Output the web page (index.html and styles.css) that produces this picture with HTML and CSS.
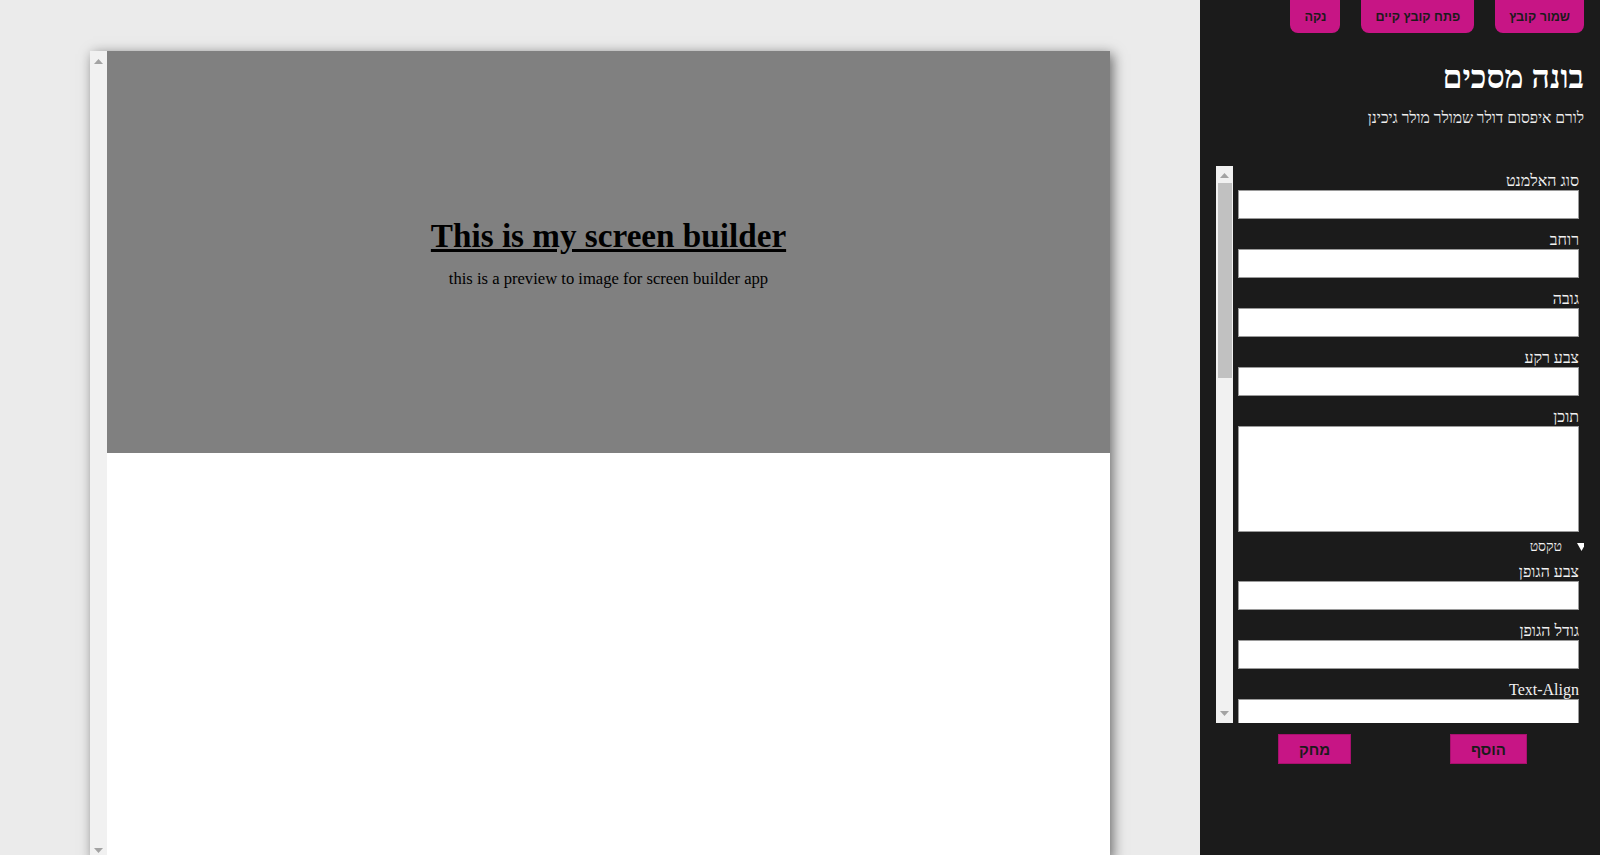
FILE: index.html
```html
<!DOCTYPE html>
<html lang="he">
<head>
<meta charset="utf-8">
<title>בונה מסכים</title>
<link rel="stylesheet" href="styles.css">
</head>
<body>
<div class="app">
  <main class="stage">
    <div class="frame">
      <div class="vscroll vscroll-frame">
        <svg class="arrow" width="9" height="5" viewBox="0 0 9 5"><path d="M0 5 L4.5 0 L9 5 Z"/></svg>
        <span class="track"></span>
        <svg class="arrow" width="9" height="5" viewBox="0 0 9 5"><path d="M0 0 L4.5 5 L9 0 Z"/></svg>
      </div>
      <div class="canvas">
        <section class="hero">
          <h1 class="hero-title">This is my screen builder</h1>
          <p class="hero-text">this is a preview to image for screen builder app</p>
        </section>
      </div>
    </div>
  </main>

  <aside class="sidebar" dir="rtl">
    <div class="toolbar">
      <button class="tool-btn">שמור קובץ</button>
      <button class="tool-btn">פתח קובץ קיים</button>
      <button class="tool-btn">נקה</button>
    </div>
    <h2 class="side-title">בונה מסכים</h2>
    <p class="side-lead">לורם איפסום דולר שמולר מולר גיכינן</p>

    <div class="form-box">
      <div class="form-scroll">
        <label class="field-label">סוג האלמנט</label>
        <input class="field" type="text">
        <label class="field-label">רוחב</label>
        <input class="field" type="text">
        <label class="field-label">גובה</label>
        <input class="field" type="text">
        <label class="field-label">צבע רקע</label>
        <input class="field" type="text">
        <label class="field-label">תוכן</label>
        <textarea class="field area"></textarea>
        <div class="group">
          <div class="summary">
            <svg class="marker" width="9" height="8" viewBox="0 0 9 8"><path d="M0 0 L9 0 L4.5 8 Z"/></svg>
            <span>טקסט</span>
          </div>
          <label class="field-label first">צבע הגופן</label>
          <input class="field" type="text">
          <label class="field-label">גודל הגופן</label>
          <input class="field" type="text">
          <label class="field-label">Text-Align</label>
          <input class="field" type="text">
        </div>
      </div>
      <div class="vscroll vscroll-form">
        <svg class="arrow" width="9" height="5" viewBox="0 0 9 5"><path d="M0 5 L4.5 0 L9 5 Z"/></svg>
        <span class="thumb"></span>
        <span class="track"></span>
        <svg class="arrow" width="9" height="5" viewBox="0 0 9 5"><path d="M0 0 L4.5 5 L9 0 Z"/></svg>
      </div>
    </div>

    <div class="actions">
      <button class="act-btn">הוסף</button>
      <button class="act-btn">מחק</button>
    </div>
  </aside>
</div>
</body>
</html>
```

FILE: styles.css
```css
* { box-sizing: border-box; }

html, body {
  margin: 0;
  padding: 0;
  height: 100%;
  overflow: hidden;
}

body {
  font-family: "Liberation Serif", "Times New Roman", serif;
  font-size: 16px;
  background: #ebebeb;
}

.app {
  display: flex;
  height: 855px;
}

/* ---------- preview stage ---------- */
.stage {
  width: 1200px;
  flex: none;
  padding: 51px 0 0 90px;
}

.frame {
  width: 1020px;
  height: 808px;
  display: flex;
  background: #ffffff;
  box-shadow: 3px 3px 12px rgba(0, 0, 0, 0.55);
}

.vscroll {
  width: 17px;
  flex: none;
  display: flex;
  flex-direction: column;
  align-items: center;
  background: #f1f1f1;
}

.vscroll .arrow {
  fill: #a3a3a3;
  flex: none;
}

.vscroll-frame {
  padding: 8px 0 6px;
}

.vscroll .track {
  flex: 1;
}

.canvas {
  flex: 1;
  display: flex;
  flex-direction: column;
}

.hero {
  height: 402px;
  background: #808080;
  display: flex;
  flex-direction: column;
  align-items: center;
  padding-top: 165px;
}

.hero-title {
  margin: 0;
  font-size: 33.2px;
  line-height: 39px;
  font-weight: bold;
  text-decoration: underline;
  color: #000;
}

.hero-text {
  margin: 13px 0 0;
  font-size: 16.6px;
  line-height: 21px;
  color: #000;
}

/* ---------- sidebar ---------- */
.sidebar {
  width: 400px;
  flex: none;
  background: #1b1b1b;
  color: #f2f2f2;
  display: flex;
  flex-direction: column;
}

.toolbar {
  display: flex;
  gap: 21px;
  padding: 0 16px 0 0;
}

.tool-btn {
  height: 33px;
  padding: 0 14px;
  border: none;
  border-radius: 0 0 8px 8px;
  background: #c71585;
  color: #1b1b1b;
  font-family: "Liberation Sans", Arial, sans-serif;
  font-size: 12.6px;
  font-weight: bold;
}

.side-title {
  margin: 26px 16px 0 0;
  font-size: 32px;
  line-height: 36px;
  font-weight: bold;
  color: #fff;
}

.side-lead {
  margin: 13px 16px 0 0;
  font-size: 15.6px;
  line-height: 20px;
  color: #eeeeee;
}

.form-box {
  margin: 38px 16px 0 16px;
  height: 557px;
  display: flex;
}

.form-scroll {
  flex: 1;
  overflow: hidden;
  padding-top: 6px;
  display: flex;
  flex-direction: column;
}

.field-label {
  display: block;
  margin: 12px 5px 0;
  font-size: 16px;
  line-height: 18px;
  color: #f2f2f2;
}

.form-scroll > .field-label:first-child {
  margin-top: 0;
}

.field {
  display: block;
  flex: none;
  margin: 0 5px;
  height: 29px;
  background: #fff;
  border: 1px solid #9a9a9a;
  font-family: inherit;
}

.area {
  height: 106px;
  resize: none;
}

.group {
  display: flex;
  flex-direction: column;
}

.summary {
  display: flex;
  align-items: center;
  gap: 15px;
  margin-top: 6px;
  line-height: 18px;
  font-size: 14px;
  color: #f2f2f2;
}

.marker {
  fill: #ffffff;
  margin-right: -2px;
}

.field-label.first {
  margin-top: 7px;
}

.vscroll-form {
  padding: 7px 0 7px;
}

.vscroll-form .thumb {
  width: 14px;
  height: 195px;
  margin-top: 5px;
  background: #c1c1c1;
}

.actions {
  display: flex;
  justify-content: space-between;
  padding: 0 73px 0 78px;
  margin-top: 11px;
}

.act-btn {
  height: 30px;
  padding: 0 20px;
  border: 1px solid #a8106e;
  border-radius: 0;
  background: #c71585;
  color: #1b1b1b;
  font-family: "Liberation Sans", Arial, sans-serif;
  font-size: 15px;
  font-weight: bold;
}
```
